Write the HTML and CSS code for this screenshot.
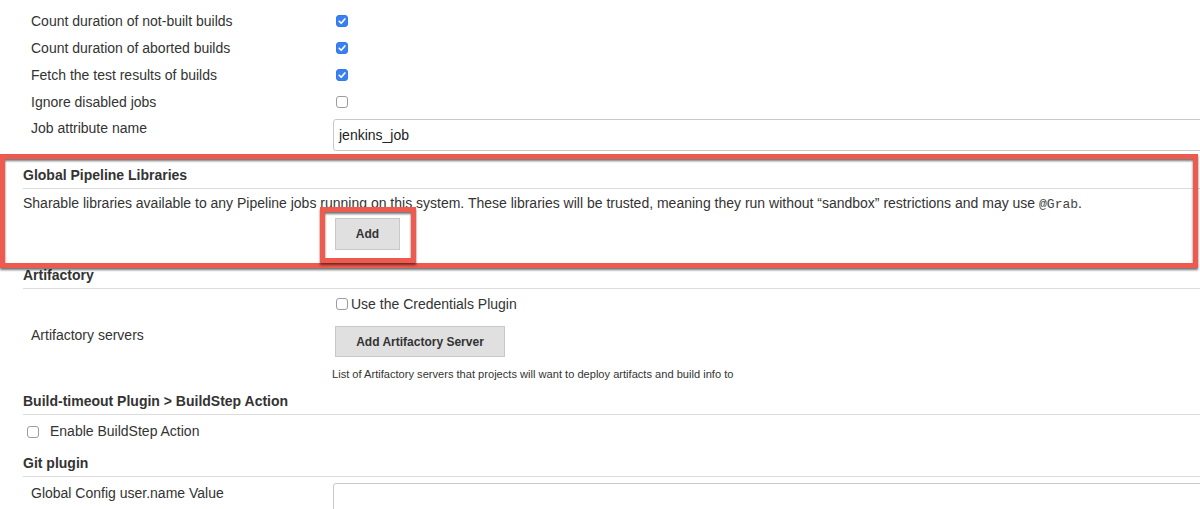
FILE: index.html
```html
<!DOCTYPE html>
<html>
<head>
<meta charset="utf-8">
<link rel="stylesheet" href="styles.css">
</head>
<body>
<div class="page">
  <div class="row">
    <div class="label">Count duration of not-built builds</div>
    <div class="ctl"><span class="cb on"><svg viewBox="0 0 12 12" width="12" height="12"><path d="M3.2 6.3 L5.2 8.3 L8.9 3.9" fill="none" stroke="#fff" stroke-width="1.6" stroke-linecap="round" stroke-linejoin="round"/></svg></span></div>
  </div>
  <div class="row">
    <div class="label">Count duration of aborted builds</div>
    <div class="ctl"><span class="cb on"><svg viewBox="0 0 12 12" width="12" height="12"><path d="M3.2 6.3 L5.2 8.3 L8.9 3.9" fill="none" stroke="#fff" stroke-width="1.6" stroke-linecap="round" stroke-linejoin="round"/></svg></span></div>
  </div>
  <div class="row">
    <div class="label">Fetch the test results of builds</div>
    <div class="ctl"><span class="cb on"><svg viewBox="0 0 12 12" width="12" height="12"><path d="M3.2 6.3 L5.2 8.3 L8.9 3.9" fill="none" stroke="#fff" stroke-width="1.6" stroke-linecap="round" stroke-linejoin="round"/></svg></span></div>
  </div>
  <div class="row">
    <div class="label">Ignore disabled jobs</div>
    <div class="ctl"><span class="cb"></span></div>
  </div>
  <div class="row row-input">
    <div class="label">Job attribute name</div>
    <div class="ctl"><div class="textbox">jenkins_job</div></div>
  </div>

  <div class="section-head head-gpl">Global Pipeline Libraries</div>
  <div class="desc">Sharable libraries available to any Pipeline jobs running on this system. These libraries will be trusted, meaning they run without “sandbox” restrictions and may use <code>@Grab</code>.</div>
  <div class="row row-add">
    <div class="label"></div>
    <div class="ctl"><button class="btn btn-add">Add</button></div>
  </div>

  <div class="section-head head-art">Artifactory</div>
  <div class="row row-cred">
    <div class="label"></div>
    <div class="ctl cred"><span class="cb"></span><span>Use the Credentials Plugin</span></div>
  </div>
  <div class="row row-servers">
    <div class="label label-top">Artifactory servers</div>
    <div class="ctl"><button class="btn btn-server">Add Artifactory Server</button></div>
  </div>
  <div class="row row-help">
    <div class="label"></div>
    <div class="ctl help">List of Artifactory servers that projects will want to deploy artifacts and build info to</div>
  </div>

  <div class="section-head head-bt">Build-timeout Plugin &gt; BuildStep Action</div>
  <div class="enable"><span class="cb"></span><span>Enable BuildStep Action</span></div>

  <div class="section-head head-git">Git plugin</div>
  <div class="row row-git">
    <div class="label label-git">Global Config user.name Value</div>
    <div class="ctl"><div class="textbox"></div></div>
  </div>
</div>

<div class="mark mark-big"></div>
<div class="mark mark-small"></div>
</body>
</html>
```
FILE: styles.css
```css
html, body {
  margin: 0;
  padding: 0;
}
body {
  width: 1200px;
  height: 509px;
  overflow: hidden;
  position: relative;
  background: #fff;
  color: #333;
  font-family: "Liberation Sans", Arial, Helvetica, sans-serif;
  font-size: 14px;
  line-height: 16px;
}
.page {
  padding-top: 7px;
}
.row {
  display: grid;
  grid-template-columns: 332px 1fr;
  align-items: center;
  min-height: 27px;
}
.label {
  padding-left: 31px;
}
.ctl {
  display: flex;
  align-items: center;
}
.cb {
  box-sizing: border-box;
  width: 12px;
  height: 12px;
  margin-left: 4px;
  border: 1px solid #9c9c9c;
  border-radius: 3px;
  background: #fff;
  display: inline-flex;
  flex: none;
}
.cb.on {
  background: #3a80f0;
  border-color: #3479e8;
}
.cb svg {
  margin: -1px;
}
.row-input {
  align-items: start;
  padding-top: 4px;
}
.row-input .label {
  margin-top: 1px;
}
.textbox {
  box-sizing: border-box;
  margin-left: 1px;
  width: 900px;
  height: 32px;
  border: 1px solid #c9c9c9;
  border-radius: 3px;
  padding: 0 5px;
  line-height: 30px;
  font-size: 14px;
  color: #222;
}
.section-head {
  margin-left: 23px;
  font-weight: bold;
  height: 16px;
  padding-bottom: 5px;
  border-bottom: 1px solid #dcdcdc;
}
.head-gpl { margin-top: 16px; }
.head-art { margin-top: 17px; }
.head-bt { margin-top: 12px; }
.head-git { margin-top: 16px; }
.desc {
  margin: 6px 0 0 23px;
  height: 16px;
}
code {
  font-family: "Liberation Mono", "DejaVu Sans Mono", monospace;
  font-size: 13px;
  line-height: 1;
  color: #444;
}
.btn {
  box-sizing: border-box;
  margin-left: 3px;
  font-family: "Liberation Sans", Arial, sans-serif;
  font-size: 12px;
  font-weight: bold;
  color: #333;
  background: #e0e0e0;
  border: 1px solid #c8c8c8;
  border-radius: 0;
  padding: 0 20px;
}
.row-add {
  margin-top: 7px;
  min-height: 0;
}
.btn-add {
  width: 65px;
  height: 32px;
  padding: 0;
}
.row-cred {
  margin-top: 7px;
  min-height: 16px;
}
.cred span:last-child {
  margin-left: 3px;
}
.row-servers {
  margin-top: 14px;
  align-items: start;
}
.label-top {
  margin-top: 1px;
}
.btn-server {
  width: 170px;
  height: 31px;
}
.row-help {
  margin-top: 10px;
  min-height: 14px;
}
.help {
  font-size: 11.1px;
  line-height: 14px;
}
.enable {
  margin-top: 8px;
  display: flex;
  align-items: center;
  height: 16px;
}
.enable .cb {
  margin-left: 27px;
  margin-top: 1px;
}
.enable span:last-child {
  margin-left: 11px;
}
.row-git {
  margin-top: 6px;
  align-items: start;
}
.label-git {
  margin-top: 2px;
}

.mark {
  position: absolute;
  box-sizing: border-box;
  border: 5px solid #ef5a4f;
  filter: drop-shadow(0 2px 1px rgba(0, 0, 0, 0.55));
}
.mark-big {
  left: 0;
  top: 154px;
  width: 1198px;
  height: 114px;
}
.mark-small {
  left: 320px;
  top: 207px;
  width: 96px;
  height: 56px;
}
```
